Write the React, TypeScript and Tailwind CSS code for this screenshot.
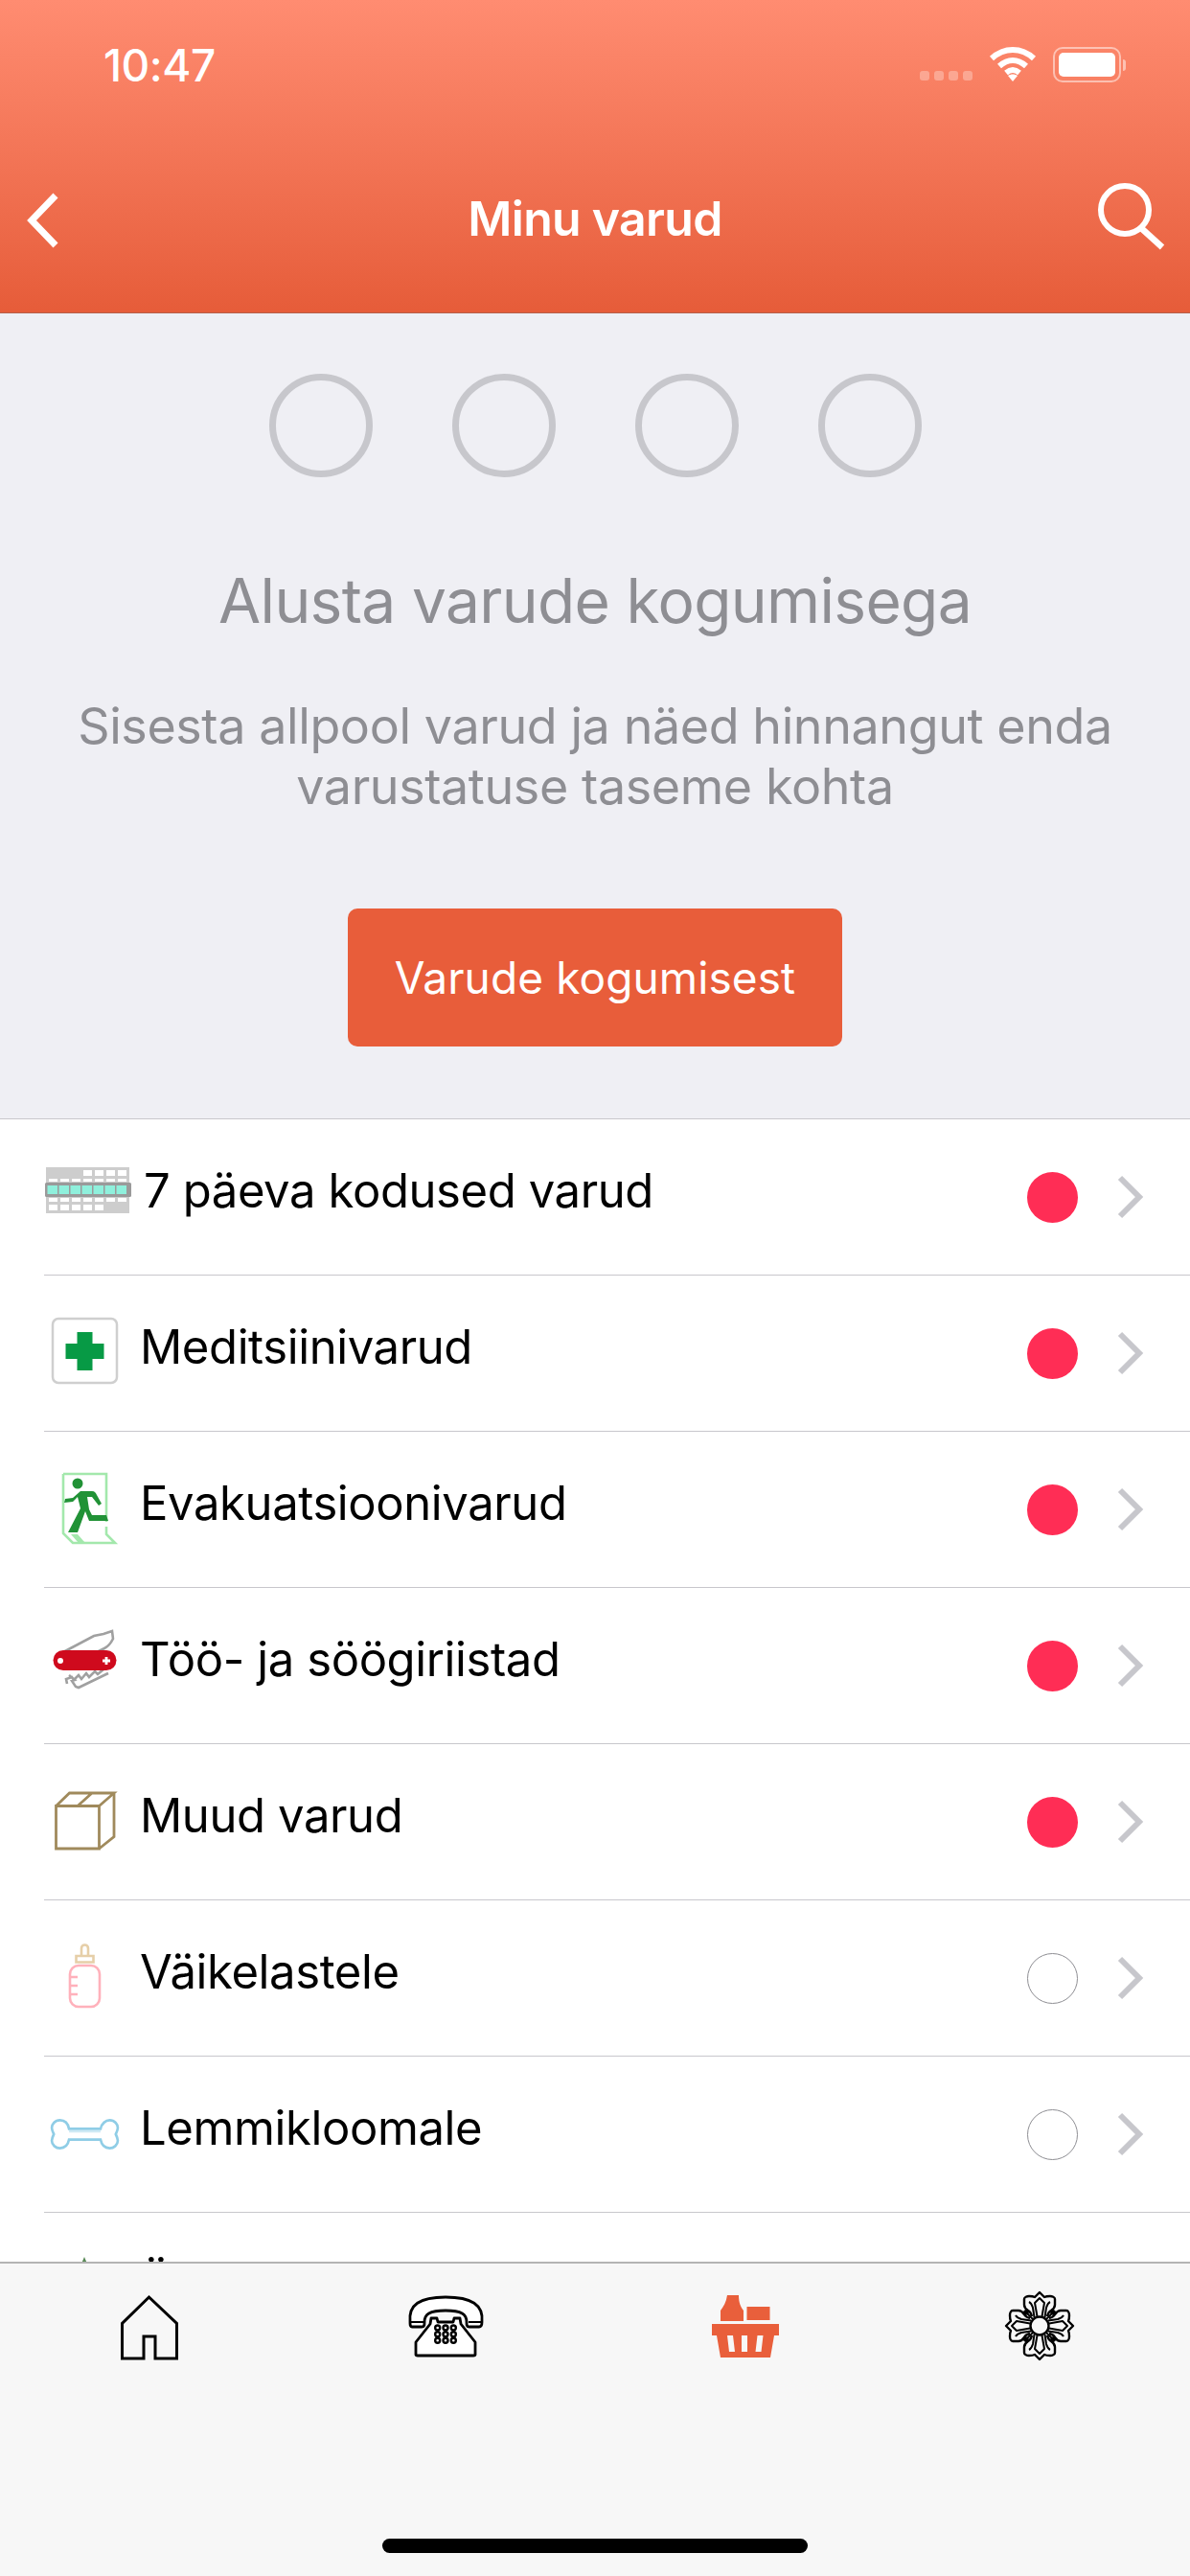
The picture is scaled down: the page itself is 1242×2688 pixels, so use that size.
import React from "react";

const FONT = 'Inter, "Noto Sans", sans-serif';

function Cal() {
  const top = [];
  for (let i = 0; i < 4; i++) top.push(<rect key={"a" + i} x={87 + i * 12} y={1221} width={9} height={6} fill="#fff" />);
  const mid = [];
  for (let i = 0; i < 7; i++) mid.push(<rect key={"b" + i} x={51 + i * 12} y={1230} width={9} height={3} fill="#fff" />);
  for (let i = 0; i < 7; i++) mid.push(<rect key={"c" + i} x={51 + i * 12} y={1250} width={9} height={4} fill="#fff" />);
  const bot = [];
  for (let i = 0; i < 5; i++) bot.push(<rect key={"d" + i} x={51 + i * 12} y={1257} width={9} height={6} fill="#fff" />);
  const band = [];
  for (let i = 0; i < 7; i++) band.push(<rect key={"e" + i} x={49.5 + i * 12} y={1237} width={10.5} height={9} fill="#8ff0dc" />);
  return (
    <svg width="104" height="80" viewBox="46 1209 104 80">
      <rect x="48" y="1218" width="87" height="48" fill="#cdcdcd" />
      {top}
      {mid}
      {bot}
      <rect x="47" y="1234" width="90" height="15" rx="1.5" fill="#9a9a9a" />
      {band}
    </svg>
  );
}

function Med() {
  return (
    <svg width="100" height="80" viewBox="46 1371 100 80">
      <rect x="55" y="1375" width="67" height="67" rx="6" fill="#fff" stroke="#cfcfcf" strokeWidth="2.5" />
      <path d="M81 1389h16v12h12v16h-12v12h-16v-12h-12v-16h12z" fill="#079a45" transform="translate(-0.5 0)" />
    </svg>
  );
}

function Exit() {
  return (
    <svg width="100" height="80" viewBox="46 1534 100 80">
      <path d="M111 1597v-1M66 1537h45v50M66 1537v62l10 10h44l-9-9v-8" fill="none" stroke="#a3e8ac" strokeWidth="2.6" />
      <path d="M74 1600h7l8 9h-7z" fill="#a3e8ac" />
      <circle cx="81" cy="1547" r="5.5" fill="#219236" />
      <path d="M68 1563l8-1 8-7 12 0c3 0 4 2 5 4l5 9-3 2-7-9-5 0 2 13 3 6 15 0 2 6-20 0-4-10-8 22-10 0 13-25-3-12-5 5-9 1z" fill="#219236" />
    </svg>
  );
}

function Knife() {
  return (
    <svg width="100" height="80" viewBox="46 1696 100 80">
      <path d="M66 1722l32-17 10-2 9-3 1 8c-2 4-5 8-9 10l-18 9" fill="none" stroke="#a0a0a0" strokeWidth="2.6" />
      <path d="M72 1746l6 5 -3 1 4 6 3 1 31-15M70 1755l-1-5 6-2 2 3 5-5 3 4 5-6 3 4 6-6 3 3 6-5" fill="none" stroke="#a0a0a0" strokeWidth="2.6" />
      <rect x="55.5" y="1720" width="66" height="21" rx="10.5" fill="#cf0a1d" />
      <circle cx="63" cy="1731" r="3" fill="#fff" />
      <path d="M107 1731h8M111 1727v8" stroke="#fff" strokeWidth="2.8" />
    </svg>
  );
}

function Box() {
  return (
    <svg width="100" height="80" viewBox="46 1860 100 80">
      <path d="M58.500 1883.500h45v44.500h-45zM58.500 1883.500l14-13.500h46.500l-15.500 13.500M119 1870v45.500l-15.500 12.500M81 1883.500l15-13.500" fill="none" stroke="#a08a5c" strokeWidth="2.8" />
    </svg>
  );
}

function Bottle() {
  return (
    <svg width="100" height="80" viewBox="46 2023 100 80">
      <path d="M85 2040v-8a3.500 3.500 0 0 1 7 0v8M79.500 2040h18v6.500h-18z" fill="none" stroke="#e6cfa8" strokeWidth="2.6" />
      <rect x="73" y="2050" width="31" height="43" rx="9" fill="none" stroke="#ffb1bb" strokeWidth="2.6" />
      <path d="M73 2062h8M73 2071h8M73 2080h8" stroke="#ffb1bb" strokeWidth="2.4" />
    </svg>
  );
}

function Bone() {
  return (
    <svg width="100" height="80" viewBox="46 2182 100 80">
      <g transform="translate(88.500 2222) scale(1.06 1.12) translate(-88.500 -2222)">
        <path d="M73 2217h31c1-5 5-8 9-8 5 0 8 4 8 7 0 2-1 4-2 6 1 2 2 4 2 6 0 4-4 7-8 7-5 0-8-3-9-8h-31c-1 5-4 8-9 8-4 0-8-3-8-7 0-2 1-4 2-6-1-2-2-4-2-6 0-3 3-7 8-7 5 0 8 3 9 8z" fill="none" stroke="#8fcde6" strokeWidth="2.5" />
        <path d="M73 2219.500h31" stroke="#cfe9f4" strokeWidth="2" />
      </g>
    </svg>
  );
}

function Tree() {
  return (
    <svg width="100" height="80" viewBox="46 2349 100 80">
      <path d="M88 2354l-3 7h6z M88 2358l-8 14h16z" fill="#5a8a58" />
    </svg>
  );
}

const Chevron = () => (
  <svg width="36" height="50" viewBox="0 0 36 50" className="shrink-0">
    <path d="M8 5l20 20L8 45" fill="none" stroke="#c7c7cc" strokeWidth="6" />
  </svg>
);

const rows = [
  { label: "7 päeva kodused varud", icon: <Cal />, on: true },
  { label: "Meditsiinivarud", icon: <Med />, on: true },
  { label: "Evakuatsioonivarud", icon: <Exit />, on: true },
  { label: "Töö- ja söögiriistad", icon: <Knife />, on: true },
  { label: "Muud varud", icon: <Box />, on: true },
  { label: "Väikelastele", icon: <Bottle />, on: false },
  { label: "Lemmikloomale", icon: <Bone />, on: false },
  { label: "Äärmuslikuks", icon: <Tree />, on: false },
];

function HomeIcon() {
  return (
    <svg width="100" height="85" viewBox="105 2385 100 85">
      <path d="M127.500 2461V2424.500L155.500 2397L184.500 2424.500V2461H162V2438H150V2461Z" fill="none" stroke="#000" strokeWidth="3" />
    </svg>
  );
}

function PhoneIcon() {
  const d = [];
  for (const y of [2429, 2435.7, 2442.3]) for (const x of [456.7, 465, 473.3]) d.push(<circle key={x + "-" + y} cx={x} cy={y} r="2.5" fill="#fff" stroke="#000" strokeWidth="2.4" />);
  return (
    <svg width="100" height="85" viewBox="416 2385 100 85">
      <path d="M428 2423c-2-18 10-26 37-26s40 8 38 26c0 3-1 5-3 5h-10c-3 0-3-2-3-5 0-8-5-12-22-12s-22 4-22 12c0 3 0 5-3 5h-10c-2 0-2-2-2-5z" fill="#fff" stroke="#000" strokeWidth="2.8" />
      <path d="M428 2423h14M489 2423h13" stroke="#000" strokeWidth="2" />
      <path d="M449 2425l1-6h6l1 4h16l1-4h6l1 6 15 19v13c0 1-1 1-2 1h-58c-1 0-2 0-2-1v-13z" fill="#fff" stroke="#000" strokeWidth="2.8" strokeLinejoin="round" />
      {d}
    </svg>
  );
}

function BasketIcon() {
  return (
    <svg width="100" height="85" viewBox="726 2385 100 85">
      <path d="M759 2395h12c0 8 2 12 5 16v11h-24v-11c3-4 6-9 7-16z" fill="#e95f3b" />
      <rect x="779.500" y="2407" width="24" height="14" fill="#e95f3b" />
      <path d="M743 2425h70v12h-5l-4 23h-52l-4-23h-5zM759 2437l2 17h6l-2-17zM774 2437v17h6v-17zM790.500 2437l-2 17h6l2-17z" fill="#e95f3b" fillRule="evenodd" />
    </svg>
  );
}

function FlowerIcon() {
  const petal = (
    <g fill="none" stroke="#000" strokeLinejoin="round">
      <path d="M1077 2417c-1-4-2-5-4-6-3-2-4-4-4-6v-6c0-2 3-3 5-3 2 0 4 0 6 1l5-5 5 5c2-1 4-1 6-1 2 0 5 1 5 3v6c0 2-1 4-4 6-2 1-3 2-4 6" strokeWidth="2.4" />
      <path d="M1079.500 2418l-1.500-10c-1-3-2-5-4-6M1090.500 2418l1.500-10c1-3 2-5 4-6" strokeWidth="2" />
      <path d="M1082.500 2417l-2.500-14 5-5 5 5-2.500 14" strokeWidth="2" />
    </g>
  );
  const diag = (
    <g>
      <circle cx="1085" cy="2407" r="2.800" fill="#000" />
      <path d="M1085 2409v10" stroke="#000" strokeWidth="2" />
    </g>
  );
  return (
    <svg width="100" height="85" viewBox="1037 2385 100 85">
      {[0, 90, 180, 270].map((a) => (
        <g key={a} transform={`rotate(${a} 1085 2427)`}>{petal}</g>
      ))}
      {[45, 135, 225, 315].map((a) => (
        <g key={a} transform={`rotate(${a} 1085 2427)`}>{diag}</g>
      ))}
      <circle cx="1085" cy="2427" r="9.500" fill="#f7f7f7" stroke="#000" strokeWidth="2.4" />
    </svg>
  );
}

export default function App() {
  return (
    <div className="w-[1242px] h-[2688px] flex flex-col overflow-hidden bg-white" style={{ fontFamily: FONT }}>
      <header className="h-[327px] shrink-0 flex flex-col text-white bg-gradient-to-b from-[#ff8c71] to-[#e65c39] border-b border-[#b5604a]">
        <div className="h-[134px] flex items-start justify-between pt-[40px] pl-[108px] pr-[72px]">
          <span className="text-[46px] leading-[56px] font-medium tracking-[-0.5px]">10:47</span>
          <div className="flex items-center gap-[17px] pt-[8px]">
            <div className="flex gap-[5px] items-end h-[38px] pb-[2px]">
              <span className="w-[10px] h-[10px] rounded-[3px] bg-white/30" />
              <span className="w-[10px] h-[10px] rounded-[3px] bg-white/30" />
              <span className="w-[10px] h-[10px] rounded-[3px] bg-white/30" />
              <span className="w-[10px] h-[10px] rounded-[3px] bg-white/30" />
            </div>
            <svg width="50" height="36" viewBox="0 0 50 36">
              <path d="M3 12c13-12 31-12 44 0M11 20c9-8 19-8 28 0M18 27c5-4 9-4 14 0" fill="none" stroke="#fff" strokeWidth="6" />
              <path d="M25 36l-5-6c3-2 7-2 10 0z" fill="#fff" />
            </svg>
            <div className="relative w-[71px] h-[37px] rounded-[10px] border-2 border-white/50 p-[4px]">
              <div className="w-full h-full rounded-[5px] bg-white" />
              <span className="absolute right-[-7px] top-[11px] w-[3px] h-[12px] rounded-r bg-white/50" />
            </div>
          </div>
        </div>
        <div className="flex-1 flex items-start justify-between pl-[26px] pr-[26px] pt-[56px]">
          <div className="w-[72px]">
            <svg width="38" height="60" viewBox="0 0 38 60" className="mt-[10px]">
              <path d="M32 4L7 30l25 26" fill="none" stroke="#fff" strokeWidth="7" />
            </svg>
          </div>
          <h1 className="text-[50px] leading-[60px] font-semibold tracking-[-0.7px] mt-[8px]">Minu varud</h1>
          <svg width="72" height="72" viewBox="0 0 72 72">
            <circle cx="30" cy="29" r="25" fill="none" stroke="#fff" strokeWidth="6" />
            <path d="M47 48l22 20" stroke="#fff" strokeWidth="6.500" />
          </svg>
        </div>
      </header>

      <section className="h-[840px] shrink-0 bg-[#efeff4] flex flex-col items-center pt-[63px] text-[#8e8e93]">
        <div className="flex gap-[83px]">
          {[0, 1, 2, 3].map((i) => (
            <div key={i} className="w-[108px] h-[108px] rounded-full border-[7px] border-[#c7c7cc]" />
          ))}
        </div>
        <h2 className="text-[64px] leading-[76px] mt-[91px] tracking-[-0.65px]">Alusta varude kogumisega</h2>
        <p className="text-[52px] leading-[63px] mt-[61px] text-center tracking-[-0.4px]">
          Sisesta allpool varud ja näed hinnangut enda
          <br />
          varustatuse taseme kohta
        </p>
        <button className="w-[516px] h-[144px] mt-[96px] rounded-[10px] bg-[#e85d3a] text-white text-[46px] tracking-[0.1px]">Varude kogumisest</button>
      </section>

      <main className="flex-1 min-h-0 overflow-hidden border-t border-[#c8c7cc] bg-white">
        {rows.map((r) => (
          <div key={r.label} className="pl-[46px]">
            <div className="h-[163px] flex items-center border-b border-[#c8c7cc] text-black">
              <div className="shrink-0">{r.icon}</div>
              <span className="flex-1 text-[49px] leading-[60px] pb-[12px] tracking-[-0.4px]">{r.label}</span>
              <div className={r.on ? "w-[53px] h-[53px] rounded-full bg-[#ff2d55]" : "w-[53px] h-[53px] rounded-full border border-[#8e8e93]"} />
              <div className="ml-[36px] mr-[45px]">
                <Chevron />
              </div>
            </div>
          </div>
        ))}
      </main>

      <nav className="relative h-[328px] shrink-0 bg-[#f7f7f7] border-t-2 border-[#b4b4b4]">
        <div className="grid grid-cols-4 pt-[23px]">
          <div className="flex justify-center"><HomeIcon /></div>
          <div className="flex justify-center"><PhoneIcon /></div>
          <div className="flex justify-center"><BasketIcon /></div>
          <div className="flex justify-center"><FlowerIcon /></div>
        </div>
        <div className="absolute left-[399px] bottom-[24px] w-[444px] h-[15px] rounded-full bg-black" />
      </nav>
    </div>
  );
}
